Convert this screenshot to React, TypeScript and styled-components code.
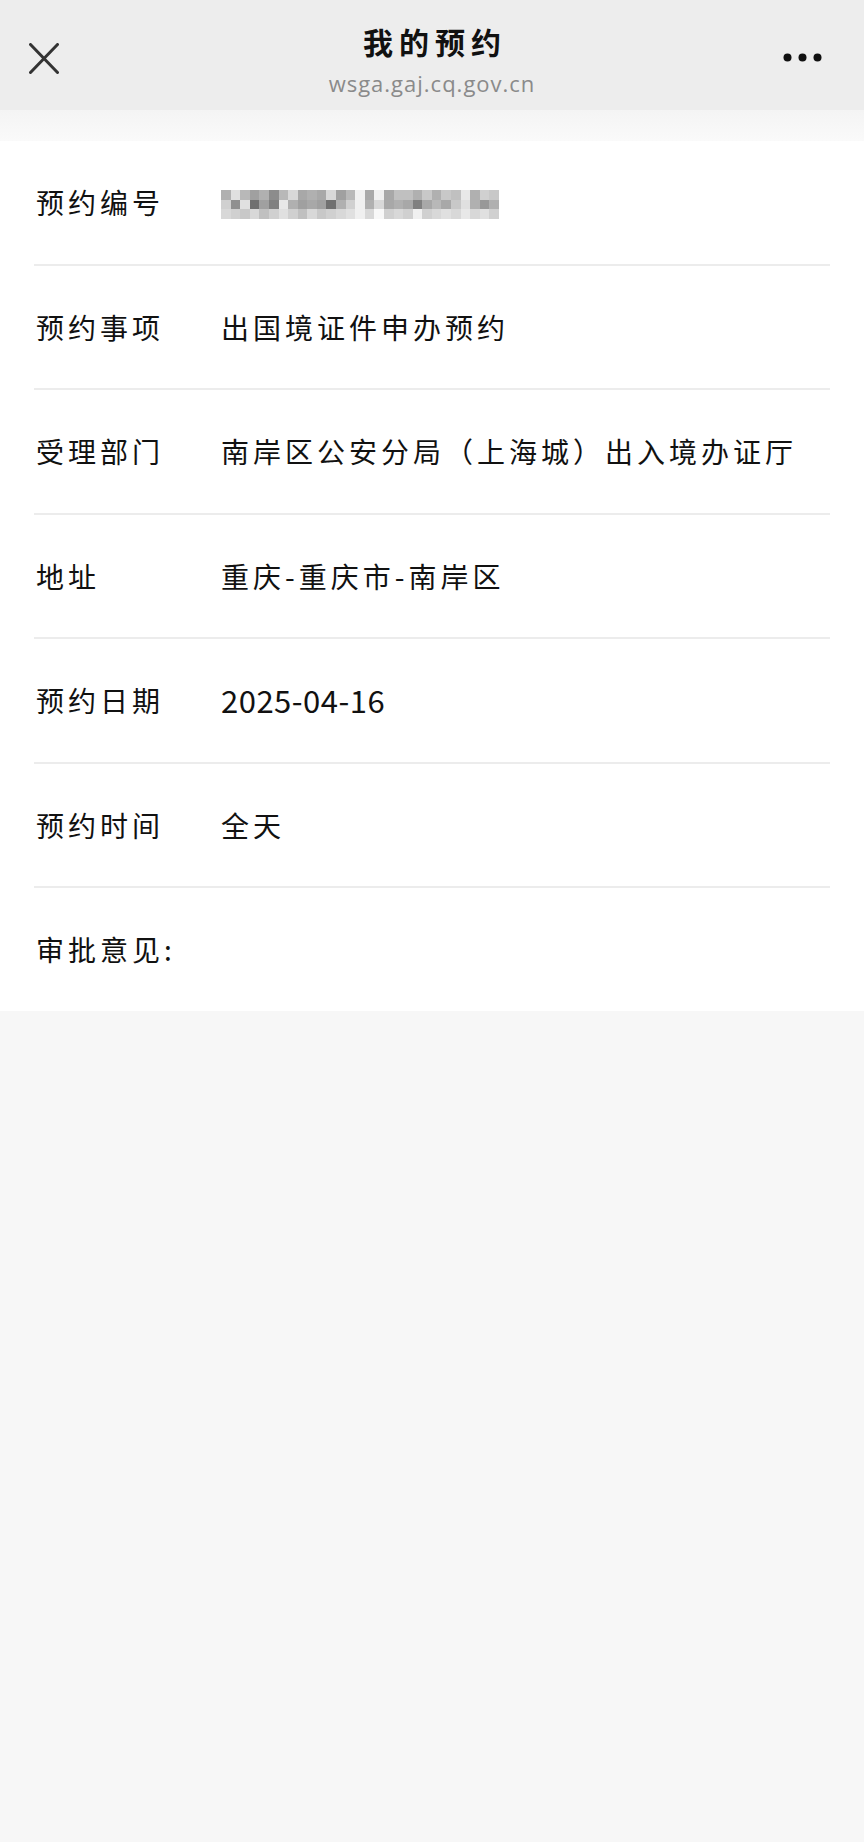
import React from "react";
import styled, { createGlobalStyle } from "styled-components";

const GlobalStyle = createGlobalStyle`
  html, body {
    margin: 0;
    padding: 0;
    background: #f7f7f7;
  }
  body {
    font-family: "Noto Sans CJK SC", "Noto Sans", sans-serif;
    color: #111;
  }
`;

const Page = styled.div`
  width: 864px;
  min-height: 1842px;
  background: #f7f7f7;
`;

const TopBar = styled.header`
  height: 110px;
  background: #ededed;
  display: grid;
  grid-template-columns: 1fr auto 1fr;
  align-items: start;
`;

const IconSlot = styled.div<{ align: "left" | "right"; top: number }>`
  display: flex;
  justify-content: ${({ align }) => (align === "left" ? "flex-start" : "flex-end")};
  padding-top: ${({ top }) => top}px;
  padding-left: ${({ align }) => (align === "left" ? 29 : 0)}px;
  padding-right: ${({ align }) => (align === "right" ? 41 : 0)}px;
`;

const TitleBlock = styled.div`
  display: flex;
  flex-direction: column;
  align-items: center;
  padding-top: 21px;
`;

const Title = styled.h1`
  margin: 0;
  font-size: 30px;
  line-height: 40px;
  font-weight: 700;
  letter-spacing: 6px;
  margin-right: -6px;
  color: #111;
`;

const Url = styled.div`
  margin-top: 8px;
  font-family: "Open Sans", "Noto Sans", sans-serif;
  font-size: 22px;
  line-height: 28px;
  color: #8a8a8a;
  letter-spacing: 1px;
`;

const Strip = styled.div`
  height: 31px;
  background: linear-gradient(#f4f4f4, #fafafa);
`;

const Card = styled.section`
  background: #fff;
  padding: 0 34px;
`;

const Row = styled.div<{ last?: boolean }>`
  height: 122.5px;
  display: flex;
  align-items: center;
  padding-left: 2px;
  border-bottom: ${({ last }) => (last ? "none" : "2px solid #ececec")};
`;

const Label = styled.div`
  width: 185px;
  flex-shrink: 0;
  font-size: 28px;
  letter-spacing: 4px;
  line-height: 36px;
  white-space: nowrap;
`;

const Value = styled.div<{ latin?: boolean }>`
  font-size: ${({ latin }) => (latin ? 31 : 28)}px;
  letter-spacing: ${({ latin }) => (latin ? 0.5 : 4)}px;
  line-height: 36px;
  white-space: nowrap;
`;

const Mosaic = styled.svg`
  display: block;
  margin-top: 4px;
`;

const mosaicRows = [
  [0xb0, 0xe0, 0xb8, 0xa0, 0xb0, 0x8c, 0xb8, 0xd8, 0xa8, 0xb0, 0xa8, 0xd8, 0xa0, 0xb8, 0xf0, 0xa8, 0xf0, 0xa8, 0xc0, 0xc0, 0xb0, 0xc8, 0xb0, 0xc8, 0xc0, 0xe8, 0xb0, 0xd0, 0xc8],
  [0xd0, 0x90, 0xe0, 0x70, 0xa0, 0x80, 0xe8, 0xb0, 0xa0, 0xa8, 0xa0, 0x70, 0xb0, 0xd0, 0xf0, 0xb0, 0xd8, 0xa8, 0xb0, 0xa8, 0x80, 0xa8, 0xb8, 0xa8, 0xc8, 0xe0, 0xb0, 0x98, 0xb0],
  [0xd8, 0xd0, 0xc8, 0xd8, 0xc0, 0xd0, 0xe0, 0xd0, 0xc0, 0xd8, 0xc8, 0xd0, 0xd8, 0xe0, 0xf0, 0xd8, 0xf8, 0xd0, 0xd8, 0xd0, 0xf0, 0xd0, 0xd8, 0xe0, 0xd8, 0xe8, 0xd8, 0xe0, 0xd0],
];

const BlurredNumber = () => (
  <Mosaic width={278} height={29} viewBox="0 0 29 3" preserveAspectRatio="none" shapeRendering="crispEdges">
    {mosaicRows.map((row, y) =>
      row.map((g, x) => (
        <rect key={`${x}-${y}`} x={x} y={y} width={1.02} height={1.02} fill={`rgb(${g},${g},${g})`} />
      ))
    )}
  </Mosaic>
);

const CloseIcon = () => (
  <svg width="30" height="31" viewBox="0 0 30 31">
    <path d="M1.5 1.5 L28.5 29.5 M28.5 1.5 L1.5 29.5" stroke="#333" strokeWidth="3" strokeLinecap="round" fill="none" />
  </svg>
);

const MoreIcon = () => (
  <svg width="40" height="9" viewBox="0 0 40 9">
    <circle cx="4.5" cy="4.5" r="4" fill="#111" />
    <circle cx="19.5" cy="4.5" r="4" fill="#111" />
    <circle cx="34.5" cy="4.5" r="4" fill="#111" />
  </svg>
);

const rows: { label: string; value?: React.ReactNode; latin?: boolean }[] = [
  { label: "预约编号", value: <BlurredNumber /> },
  { label: "预约事项", value: "出国境证件申办预约" },
  { label: "受理部门", value: "南岸区公安分局（上海城）出入境办证厅" },
  { label: "地址", value: "重庆-重庆市-南岸区" },
  { label: "预约日期", value: "2025-04-16", latin: true },
  { label: "预约时间", value: "全天" },
];

export default function App() {
  return (
    <Page>
      <GlobalStyle />
      <TopBar>
        <IconSlot align="left" top={43}>
          <CloseIcon />
        </IconSlot>
        <TitleBlock>
          <Title>我的预约</Title>
          <Url>wsga.gaj.cq.gov.cn</Url>
        </TitleBlock>
        <IconSlot align="right" top={53}>
          <MoreIcon />
        </IconSlot>
      </TopBar>
      <Strip />
      <Card>
        {rows.map((r) => (
          <Row key={r.label}>
            <Label>{r.label}</Label>
            <Value latin={r.latin}>{r.value}</Value>
          </Row>
        ))}
        <Row last>
          <Label>审批意见:</Label>
        </Row>
      </Card>
    </Page>
  );
}
